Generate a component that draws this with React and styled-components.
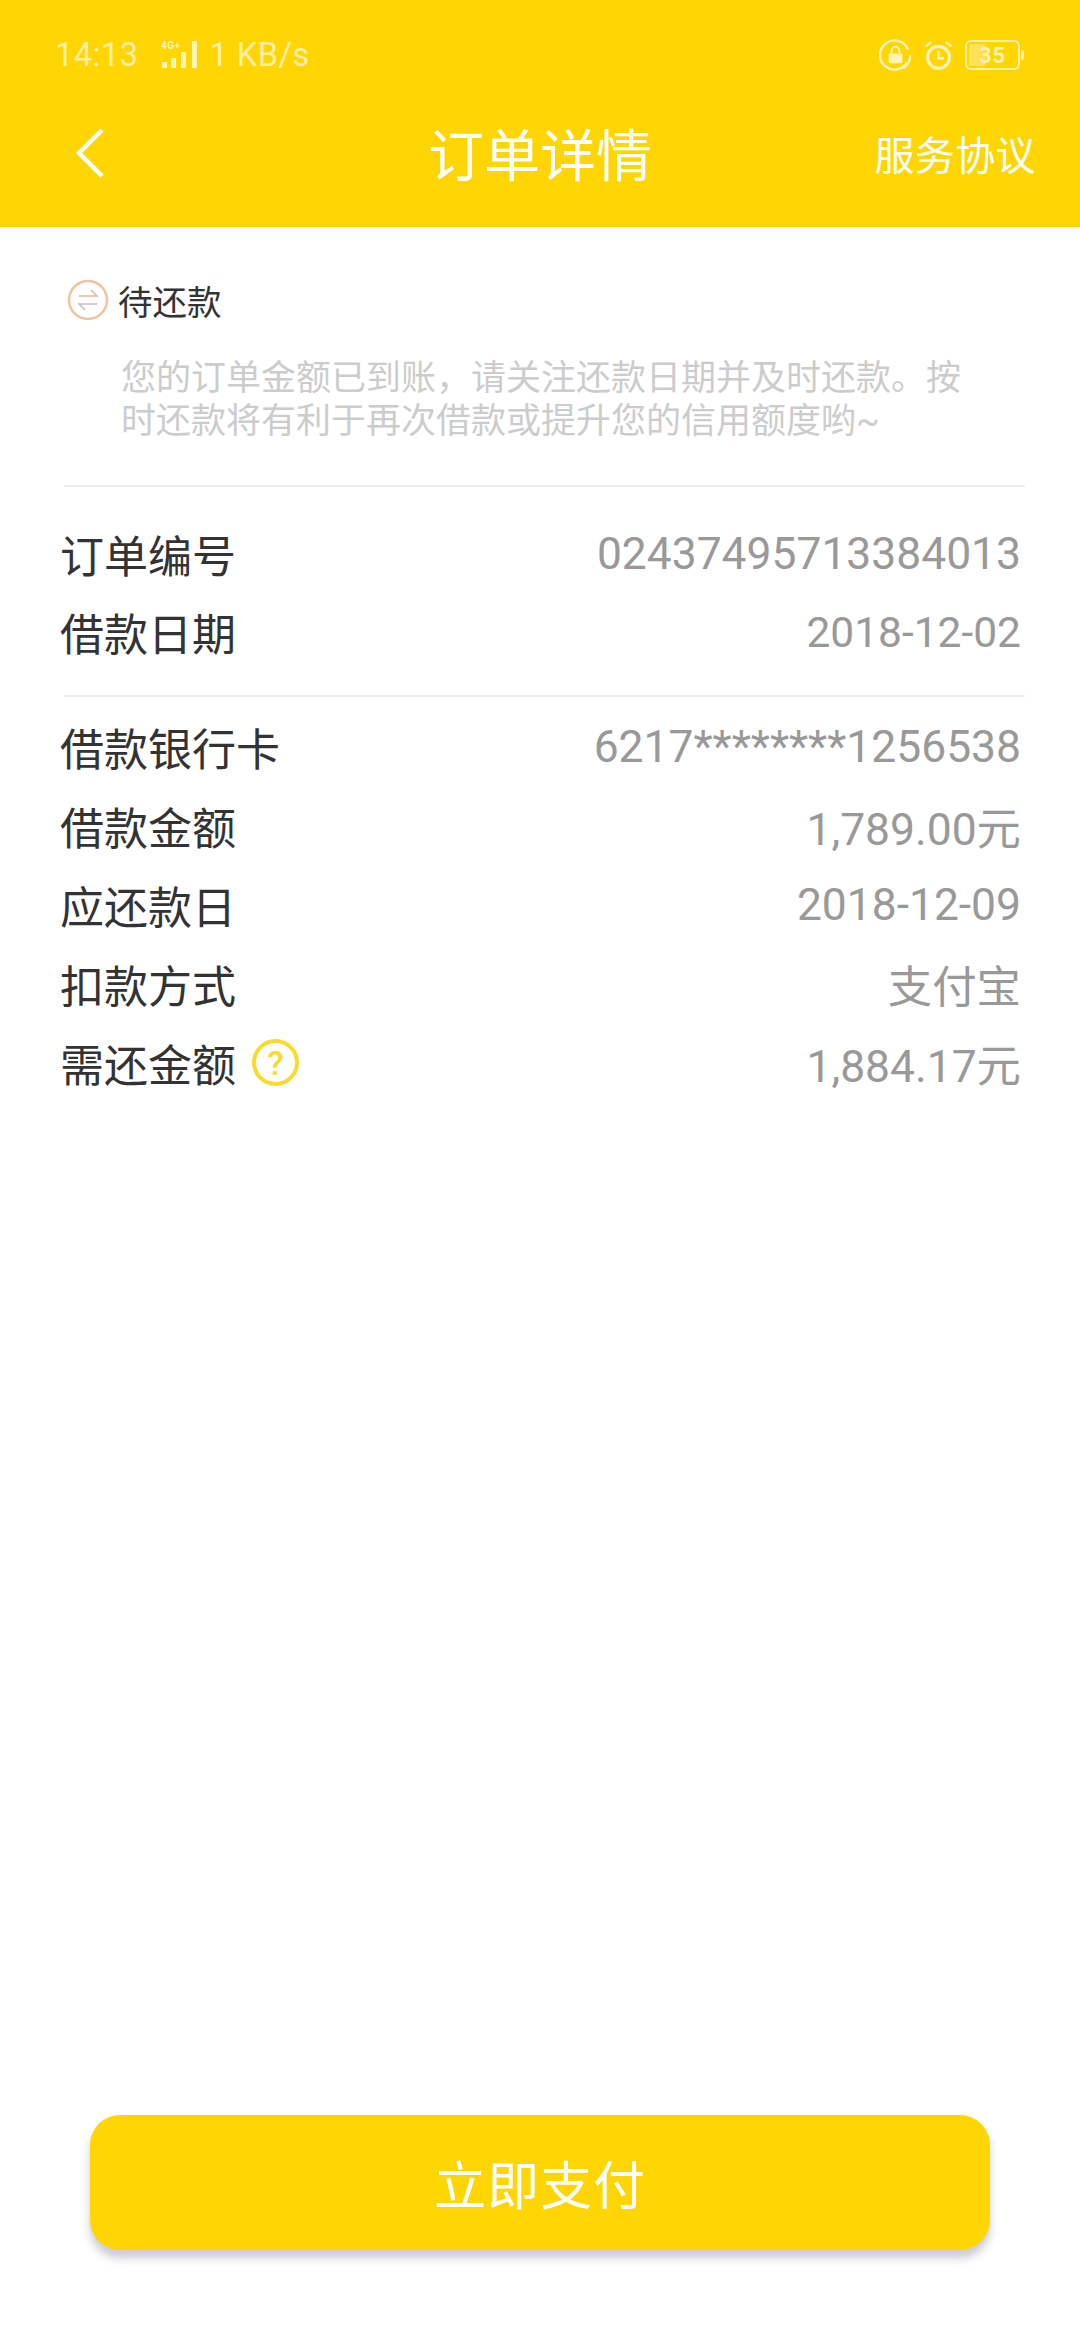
import React from 'react';
import styled, { createGlobalStyle } from 'styled-components';

const cjk = `Roboto, "Noto Sans CJK SC", sans-serif`;

const GlobalStyle = createGlobalStyle`
	html, body {
		margin: 0;
		padding: 0;
		background: #fff;
	}
	* {
		box-sizing: border-box;
	}
`;

const noticeText =
	'您的订单金额已到账\uFF0C请关注还款日期并及时还款。按时还款将有利于再次借款或提升您的信用额度哟~';

const infoRows = [
	{ label: '订单编号', value: '02437495713384013' },
	{ label: '借款日期', value: '2018-12-02', small: true },
];

const payRows = [
	{ label: '借款银行卡', value: '6217********1256538' },
	{ label: '借款金额', value: '1,789.00元' },
	{ label: '应还款日', value: '2018-12-09' },
	{ label: '扣款方式', value: '支付宝' },
	{ label: '需还金额', value: '1,884.17元', help: true },
];

export default function App() {
	return (
		<Page>
			<GlobalStyle />
			<Header>
				<StatusBar>
					<StatusLeft>
						<Clock>14:13</Clock>
						<SignalIcon />
						<span>1 KB/s</span>
					</StatusLeft>
					<StatusRight>
						<LockIcon />
						<AlarmIcon />
						<Battery>
							<BatteryFill />
							<BatteryText>35</BatteryText>
							<BatteryCap />
						</Battery>
					</StatusRight>
				</StatusBar>
				<NavBar>
					<BackButton>
						<svg width="30" height="50" viewBox="0 0 30 50" fill="none">
							<path d="M27 2 L4 25 L27 48" stroke="#fff" strokeWidth="4.5" />
						</svg>
					</BackButton>
					<Title>订单详情</Title>
					<NavLink>服务协议</NavLink>
				</NavBar>
			</Header>

			<Content>
				<StateRow>
					<svg width="42" height="42" viewBox="0 0 42 42" fill="none">
						<circle cx="21" cy="21" r="19" stroke="#f0c4a0" strokeWidth="2.5" />
						<path d="M12 17 H30 L24 11" stroke="#e8b898" strokeWidth="1.5" />
						<path d="M30 25 H12 L18 31" stroke="#c0c0cc" strokeWidth="1.5" />
					</svg>
					<StateText>待还款</StateText>
				</StateRow>
				<Notice>{noticeText}</Notice>

				<Divider />
				<RowGroup $top={28} $bottom={24}>
					{infoRows.map(row => (
						<Row key={row.label} $height={78}>
							<Label>{row.label}</Label>
							<Value $small={row.small}>{row.value}</Value>
						</Row>
					))}
				</RowGroup>
				<Divider />
				<RowGroup $top={10} $bottom={0}>
					{payRows.map(row => (
						<Row key={row.label} $height={79}>
							<Label>
								{row.label}
								{row.help && <HelpBadge>?</HelpBadge>}
							</Label>
							<Value>{row.value}</Value>
						</Row>
					))}
				</RowGroup>
			</Content>

			<Footer>
				<PayButton>立即支付</PayButton>
			</Footer>
		</Page>
	);
}

const SignalIcon = () => (
	<svg width="38" height="30" viewBox="0 0 38 30">
		<text x="0" y="9" fontSize="10" fontWeight="700" fontFamily="Roboto, sans-serif" fill="#fff4b8">
			4G+
		</text>
		<g fill="#fff4b8">
			<rect x="1" y="22" width="5" height="6" />
			<rect x="10" y="18" width="5" height="10" />
			<rect x="20" y="12" width="5" height="16" />
			<rect x="31" y="1" width="5" height="27" />
		</g>
	</svg>
);

const LockIcon = () => (
	<svg width="33" height="33" viewBox="0 0 34 34" fill="none">
		<path d="M29 24 A15 15 0 1 1 30 11" stroke="#fff4b8" strokeWidth="2.5" />
		<path d="M32 17 A15 15 0 0 1 25 30" stroke="#fff4b8" strokeWidth="2.5" />
		<rect x="10" y="15" width="14" height="10" rx="1" fill="#fff4b8" />
		<path d="M13 15 V12 A4 4 0 0 1 21 12 V15" stroke="#fff4b8" strokeWidth="2" />
	</svg>
);

const AlarmIcon = () => (
	<svg width="31" height="33" viewBox="0 0 34 34" fill="none">
		<circle cx="17" cy="19" r="12" stroke="#fff4b8" strokeWidth="3.5" />
		<path d="M17 12 V20 H23" stroke="#fff4b8" strokeWidth="2.5" />
		<path d="M3 7 L9 2 M31 7 L25 2" stroke="#fff4b8" strokeWidth="2.5" />
	</svg>
);

const Page = styled.div`
	width: 1080px;
	height: 2340px;
	display: flex;
	flex-direction: column;
	background: #fff;
	font-family: ${cjk};
`;

const Header = styled.header`
	height: 227px;
	flex-shrink: 0;
	background: #ffd504;
	display: flex;
	flex-direction: column;
`;

const StatusBar = styled.div`
	height: 110px;
	padding: 0 60px 0 55px;
	display: flex;
	align-items: center;
	justify-content: space-between;
`;

const StatusLeft = styled.div`
	display: flex;
	align-items: center;
	gap: 10px;
	font-size: 32.5px;
	letter-spacing: 0.5px;
	color: #fff0a6;
`;

const Clock = styled.span`
	margin-right: 13px;
`;

const StatusRight = styled.div`
	display: flex;
	align-items: center;
	gap: 11px;
`;

const Battery = styled.div`
	position: relative;
	width: 55px;
	height: 30px;
	border: 2px solid #fff0a6;
	border-radius: 6px;
	display: flex;
	align-items: center;
	justify-content: center;
`;

const BatteryFill = styled.div`
	position: absolute;
	left: 2px;
	top: 2px;
	bottom: 2px;
	width: 17px;
	background: #ffe156;
	border-radius: 2px;
`;

const BatteryText = styled.span`
	position: relative;
	font-size: 22px;
	font-weight: 700;
	letter-spacing: 1px;
	color: #fff3b5;
`;

const BatteryCap = styled.div`
	position: absolute;
	right: -6px;
	top: 8px;
	width: 3px;
	height: 10px;
	background: #fff0a6;
	border-radius: 0 2px 2px 0;
`;

const NavBar = styled.div`
	position: relative;
	flex: 1;
	display: flex;
	align-items: center;
	justify-content: center;
	padding-bottom: 34px;
`;

const BackButton = styled.div`
	position: absolute;
	left: 75px;
	top: 18px;
	display: flex;
`;

const Title = styled.h1`
	margin: 0;
	font-size: 56px;
	font-weight: 400;
	color: #fff;
	font-family: ${cjk};
`;

const NavLink = styled.span`
	position: absolute;
	right: 44px;
	top: 19px;
	font-size: 40px;
	line-height: 56px;
	letter-spacing: 0.4px;
	color: #fff;
`;

const Content = styled.main`
	flex: 1;
	padding: 49px 59px 0 60px;
`;

const StateRow = styled.div`
	height: 48px;
	padding-left: 7px;
	display: flex;
	align-items: center;
	gap: 9px;
`;

const StateText = styled.span`
	font-size: 34.5px;
	color: #333;
`;

const Notice = styled.p`
	margin: 33px 30px 42px 61px;
	font-size: 35px;
	line-height: 43px;
	color: #ccc;
`;

const Divider = styled.div`
	height: 2px;
	margin: 0 -4px 0 4px;
	background: #eee;
`;

const RowGroup = styled.div`
	padding: ${props => props.$top}px 0 ${props => props.$bottom}px;
`;

const Row = styled.div`
	height: ${props => props.$height}px;
	display: flex;
	align-items: center;
	justify-content: space-between;
`;

const Label = styled.span`
	display: flex;
	align-items: center;
	font-size: 44px;
	color: #333;
`;

const Value = styled.span`
	font-size: ${props => (props.$small ? '42.5px' : '44.4px')};
	color: #999;
`;

const HelpBadge = styled.span`
	width: 47px;
	height: 47px;
	margin-left: 16px;
	border: 4px solid #fada2c;
	border-radius: 50%;
	display: flex;
	align-items: center;
	justify-content: center;
	font-size: 34px;
	font-weight: 500;
	line-height: 1;
	color: #fada2c;
`;

const Footer = styled.footer`
	padding: 0 90px 90px;
`;

const PayButton = styled.button`
	width: 100%;
	height: 135px;
	border: none;
	border-radius: 30px;
	background: #ffd504;
	box-shadow: 0 8px 8px rgba(90, 80, 110, 0.3);
	font-family: ${cjk};
	font-size: 52px;
	letter-spacing: 1px;
	color: #fff;
`;
